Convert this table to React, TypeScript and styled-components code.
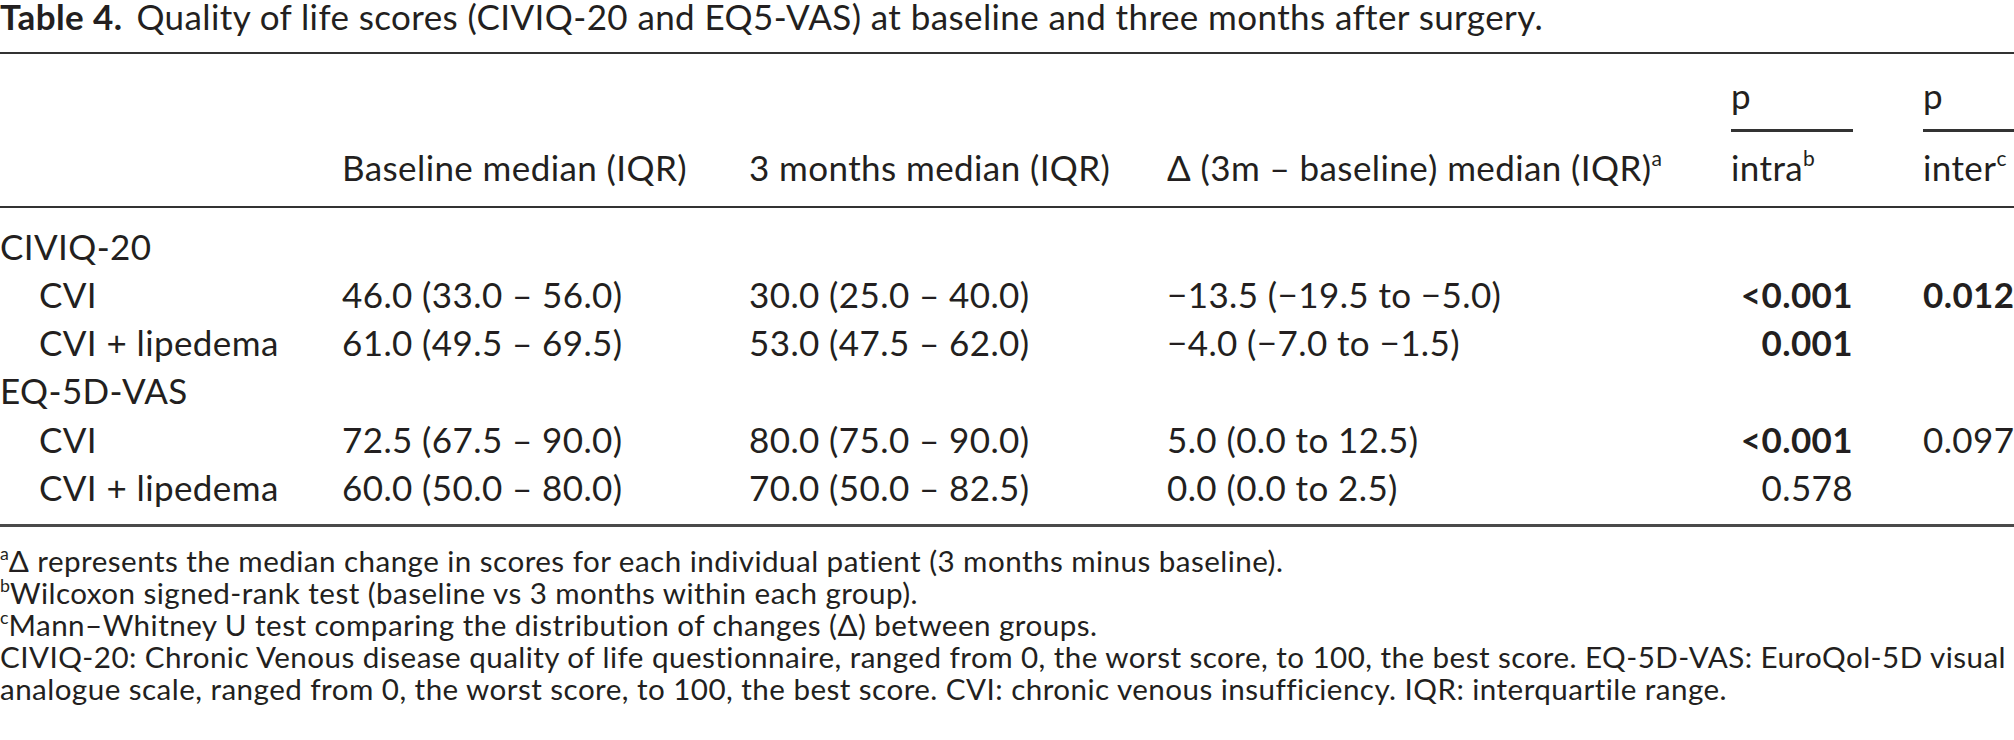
import React from "react"
import styled, { createGlobalStyle } from "styled-components"

const GlobalStyle = createGlobalStyle`
  html, body {
    margin: 0;
    padding: 0;
    background: #ffffff;
    overflow: hidden;
  }
  body {
    font-family: Lato, "Open Sans", "Noto Sans", sans-serif;
    color: #231f20;
  }
`

const Page = styled.div`
  width: 2085px;
`

const Caption = styled.div`
  font-size: 35px;
  line-height: 32px;
  letter-spacing: 0.4px;
  white-space: nowrap;
  margin-bottom: 20px;
`

const CaptionLabel = styled.span`
  font-weight: 700;
  margin-right: 14px;
`

const Table = styled.table`
  table-layout: fixed;
  width: 2085px;
  border-collapse: collapse;
  border-top: 2px solid #333333;
  border-bottom: 3px solid #4a4a4a;
  font-size: 35px;
  letter-spacing: 0.4px;
`

const Sup = styled.sup`
  font-size: 0.6em;
  line-height: 0;
  vertical-align: 0.7em;
  letter-spacing: 0;
`

const HeadCell = styled.th<{ $rule?: boolean; $lift?: number }>`
  font-weight: 400;
  text-align: left;
  vertical-align: bottom;
  white-space: nowrap;
  padding: 0 0 ${(p) => p.$lift ?? 19}px 0;
  line-height: 40px;
  height: 77px;
  box-sizing: border-box;
  border-bottom: ${(p) => (p.$rule ? "3px solid #333333" : "none")};
`

const HeadRow = styled.tr`
  border-bottom: 2px solid #333333;
`

const Cell = styled.td<{ $align?: "left" | "right"; $indent?: boolean; $bold?: boolean; $pos?: "first" | "last" }>`
  padding: 0;
  padding-left: ${(p) => (p.$indent ? "39px" : "0")};
  padding-top: ${(p) => (p.$pos === "first" ? "13.5px" : "0")};
  padding-bottom: ${(p) => (p.$pos === "last" ? "13px" : "0")};
  line-height: 48.3px;
  white-space: nowrap;
  text-align: ${(p) => p.$align ?? "left"};
  font-weight: ${(p) => (p.$bold ? 700 : 400)};
`

const Notes = styled.div`
  width: 2014px;
  margin-top: 17.5px;
  font-size: 29.6px;
  line-height: 32px;
  letter-spacing: 0.45px;
`

const NoteLine = styled.div``

type Row = {
  label: string
  group?: boolean
  base?: string
  three?: string
  delta?: string
  intra?: string
  intraBold?: boolean
  inter?: string
  interBold?: boolean
}

const rows: Row[] = [
  { label: "CIVIQ-20", group: true },
  {
    label: "CVI",
    base: "46.0 (33.0 – 56.0)",
    three: "30.0 (25.0 – 40.0)",
    delta: "−13.5 (−19.5 to −5.0)",
    intra: "<0.001",
    intraBold: true,
    inter: "0.012",
    interBold: true,
  },
  {
    label: "CVI + lipedema",
    base: "61.0 (49.5 – 69.5)",
    three: "53.0 (47.5 – 62.0)",
    delta: "−4.0 (−7.0 to −1.5)",
    intra: "0.001",
    intraBold: true,
  },
  { label: "EQ-5D-VAS", group: true },
  {
    label: "CVI",
    base: "72.5 (67.5 – 90.0)",
    three: "80.0 (75.0 – 90.0)",
    delta: "5.0 (0.0 to 12.5)",
    intra: "<0.001",
    intraBold: true,
    inter: "0.097",
  },
  {
    label: "CVI + lipedema",
    base: "60.0 (50.0 – 80.0)",
    three: "70.0 (50.0 – 82.5)",
    delta: "0.0 (0.0 to 2.5)",
    intra: "0.578",
  },
]

export default function App() {
  return (
    <Page>
      <GlobalStyle />
      <Caption>
        <CaptionLabel>Table 4.</CaptionLabel>
        Quality of life scores (CIVIQ-20 and EQ5-VAS) at baseline and three months after surgery.
      </Caption>

      <Table>
        <colgroup>
          <col style={{ width: 342 }} />
          <col style={{ width: 407 }} />
          <col style={{ width: 418 }} />
          <col style={{ width: 564 }} />
          <col style={{ width: 122 }} />
          <col style={{ width: 70 }} />
          <col style={{ width: 162 }} />
        </colgroup>
        <thead>
          <tr>
            <HeadCell />
            <HeadCell />
            <HeadCell />
            <HeadCell />
            <HeadCell $rule $lift={14}>
              p
            </HeadCell>
            <HeadCell />
            <HeadCell $rule $lift={14}>
              p
            </HeadCell>
          </tr>
          <HeadRow>
            <HeadCell />
            <HeadCell>Baseline median (IQR)</HeadCell>
            <HeadCell>3 months median (IQR)</HeadCell>
            <HeadCell>
              Δ (3m – baseline) median (IQR)<Sup>a</Sup>
            </HeadCell>
            <HeadCell>
              intra<Sup>b</Sup>
            </HeadCell>
            <HeadCell />
            <HeadCell>
              inter<Sup>c</Sup>
            </HeadCell>
          </HeadRow>
        </thead>
        <tbody>
          {rows.map((r, i) => {
            const pos = i === 0 ? "first" : i === rows.length - 1 ? "last" : undefined
            return (
              <tr key={i}>
                <Cell $indent={!r.group} $pos={pos}>
                  {r.label}
                </Cell>
                <Cell $pos={pos}>{r.base}</Cell>
                <Cell $pos={pos}>{r.three}</Cell>
                <Cell $pos={pos}>{r.delta}</Cell>
                <Cell $pos={pos} $align="right" $bold={r.intraBold}>
                  {r.intra}
                </Cell>
                <Cell $pos={pos} />
                <Cell $pos={pos} $bold={r.interBold}>
                  {r.inter}
                </Cell>
              </tr>
            )
          })}
        </tbody>
      </Table>

      <Notes>
        <NoteLine>
          <Sup>a</Sup>Δ represents the median change in scores for each individual patient (3 months minus baseline).
        </NoteLine>
        <NoteLine>
          <Sup>b</Sup>Wilcoxon signed-rank test (baseline vs 3 months within each group).
        </NoteLine>
        <NoteLine>
          <Sup>c</Sup>Mann–Whitney U test comparing the distribution of changes (Δ) between groups.
        </NoteLine>
        <NoteLine>
          CIVIQ-20: Chronic Venous disease quality of life questionnaire, ranged from 0, the worst score, to 100, the best
          score. EQ-5D-VAS: EuroQol-5D visual analogue scale, ranged from 0, the worst score, to 100, the best score. CVI:
          chronic venous insufficiency. IQR: interquartile range.
        </NoteLine>
      </Notes>
    </Page>
  )
}
